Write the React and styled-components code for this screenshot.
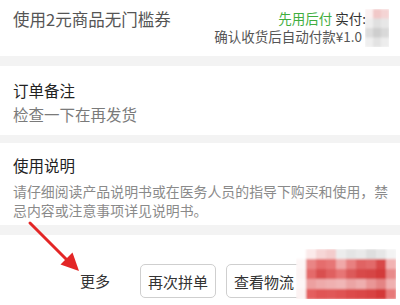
import React from "react";
import styled, { createGlobalStyle } from "styled-components";

const Global = createGlobalStyle`
  html, body { margin: 0; padding: 0; background: #f3f3f3; }
  body { font-family: "Noto Sans CJK SC", "Noto Sans", sans-serif; }
`;

const Page = styled.div`
  position: relative;
  width: 400px;
  height: 305px;
  overflow: hidden;
  background: #f3f3f3;
  display: flex;
  flex-direction: column;
`;

const Card = styled.section`
  position: relative;
  flex: none;
  background: #fff;
  height: ${(p) => p.$h}px;
  margin-bottom: ${(p) => p.$mb || 0}px;
  padding: ${(p) => p.$pad};
  box-sizing: border-box;
`;

const PayRow = styled.div`
  display: flex;
  justify-content: space-between;
  align-items: flex-start;
`;

const Coupon = styled.div`
  flex: none;
  font-size: 16.5px;
  line-height: 18px;
  color: #555;
  white-space: nowrap;
`;

const PayCol = styled.div`
  display: flex;
  flex-direction: column;
  align-items: flex-end;
  font-size: 13.5px;
  line-height: 17.5px;
  color: #555;
`;

const PayLine = styled.div`
  white-space: nowrap;
  color: ${(p) => p.$color || "#555"};
`;

const Green = styled.span`
  color: #3fae3f;
`;

const Tail = styled.span`
  display: inline-block;
  width: ${(p) => p.$w}px;
`;

const Title = styled.div`
  font-size: 15.5px;
  line-height: 22px;
  color: #222;
`;

const Sub = styled.div`
  font-size: 15.5px;
  line-height: 22px;
  color: #7a7a7a;
  margin-top: ${(p) => p.$mt || 0}px;
`;

const Desc = styled.div`
  font-size: 13.9px;
  line-height: 18.5px;
  color: #8a8a8a;
  margin-top: 6px;
`;

const DescLine = styled.div`
  white-space: nowrap;
`;

const Bar = styled.footer`
  position: relative;
  flex: 1;
  background: #fff;
  display: flex;
  align-items: flex-start;
  padding: 29px 0 0 80px;
  box-sizing: border-box;
`;

const More = styled.span`
  font-size: 15px;
  line-height: 34px;
  color: #333;
  margin-right: 30px;
`;

const Btns = styled.div`
  display: flex;
  gap: 10px;
`;

const Btn = styled.button`
  height: 34px;
  width: 76px;
  box-sizing: border-box;
  border: 1px solid #cfcfcf;
  border-radius: 5px;
  background: #fff;
  font-family: inherit;
  font-size: 15px;
  color: #333;
  padding: 0;
  white-space: nowrap;
`;

const Mosaic = styled.svg`
  position: absolute;
  left: ${(p) => p.$x}px;
  top: ${(p) => p.$y}px;
`;

const Arrow = styled.svg`
  position: absolute;
  left: 0;
  top: 0;
  pointer-events: none;
`;

const topCells = [
  ["#fbf0f0", "#f1c8c8", "#f4d4d4"],
  ["#eeeeee", "#e0e0e0", "#e7e7e7"],
  ["#dddddd", "#cecece", "#d9d9d9"],
  ["#efefef", "#e3e3e3", "#ededed"],
];

const btnCells = [
  ["#ffffff", "#fbeaea", "#f6d6d6", "#f3cccc", "#ececec", "#e4e4e4", "#e9e9e9", "#dedede", "#e6e6e6", "#f3f3f3"],
  ["#fdf6f6", "#e98585", "#e56d6d", "#e77676", "#f0a8a8", "#e88080", "#e06464", "#e26b6b", "#d84848", "#f2b4b4"],
  ["#fcf3f3", "#e46a6a", "#d94f4f", "#e06060", "#e77575", "#dc5a5a", "#d84a4a", "#d64545", "#d33b3b", "#e88a8a"],
  ["#fdf7f7", "#eca0a0", "#eeaaaa", "#efb0b0", "#f0b6b6", "#eba4a4", "#eeaeae", "#e99696", "#e48484", "#efb0b0"],
  ["#fcf2f2", "#e45f5f", "#e05555", "#e05858", "#df5252", "#dc4c4c", "#da4646", "#d84242", "#d43838", "#e77a7a"],
];

function MosaicGrid({ cells, cw, ch, x, y }) {
  const w = cells[0].length * cw;
  const h = cells.length * ch;
  const id = `blur-${x}-${y}`;
  return (
    <Mosaic $x={x} $y={y} width={w} height={h} viewBox={`0 0 ${w} ${h}`}>
      <defs>
        <filter id={id} x="-5%" y="-5%" width="110%" height="110%">
          <feGaussianBlur stdDeviation="0.8" />
        </filter>
      </defs>
      <g filter={`url(#${id})`}>
        {cells.map((row, r) =>
          row.map((c, i) => (
            <rect key={`${r}-${i}`} x={i * cw} y={r * ch} width={cw + 0.5} height={ch + 0.5} fill={c} />
          ))
        )}
      </g>
    </Mosaic>
  );
}

export default function App() {
  return (
    <>
      <Global />
      <Page>
        <Card $h={56} $mb={10} $pad="10px 10px 0 13px">
          <PayRow>
            <Coupon>使用2元商品无门槛券</Coupon>
            <PayCol>
              <PayLine $color="#333">
                <Green>先用后付</Green> 实付:<Tail $w={24} />
              </PayLine>
              <PayLine>
                确认收货后自动付款¥1.0<Tail $w={28} />
              </PayLine>
            </PayCol>
          </PayRow>
          <MosaicGrid cells={topCells} cw={8} ch={9.5} x={365} y={9} />
        </Card>
        <Card $h={69} $mb={8} $pad="13px 10px 0 13px">
          <Title>订单备注</Title>
          <Sub $mt={2}>检查一下在再发货</Sub>
        </Card>
        <Card $h={82} $mb={10} $pad="11px 3px 0 13px">
          <Title>使用说明</Title>
          <Desc>
            <DescLine>请仔细阅读产品说明书或在医务人员的指导下购买和使用，禁</DescLine>
            <DescLine>忌内容或注意事项详见说明书。</DescLine>
          </Desc>
        </Card>
        <Bar>
          <More>更多</More>
          <Btns>
            <Btn>再次拼单</Btn>
            <Btn>查看物流</Btn>
          </Btns>
          <MosaicGrid cells={btnCells} cw={10} ch={10} x={296} y={14} />
        </Bar>
        <Arrow width="400" height="305" viewBox="0 0 400 305">
          <line x1="30" y1="223" x2="68" y2="261" stroke="#e32626" strokeWidth="3" strokeLinecap="round" />
          <polygon points="79,271 60.5,264.5 72.5,252.5" fill="#e32626" />
        </Arrow>
      </Page>
    </>
  );
}
